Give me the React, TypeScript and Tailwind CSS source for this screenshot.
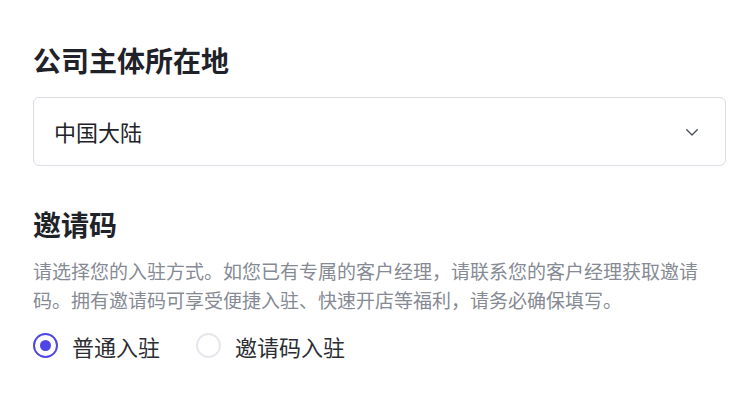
import React, { useState } from "react";

const font = { fontFamily: '"Noto Sans CJK SC", "Noto Sans", sans-serif' };

function Radio({
  label,
  checked,
  onClick,
}: {
  label: string;
  checked: boolean;
  onClick: () => void;
}) {
  return (
    <button type="button" onClick={onClick} className="flex items-center gap-[14px]">
      <span
        className={`flex h-[25px] w-[25px] items-center justify-center rounded-full border-2 ${
          checked ? "border-[#4f46e5]" : "border-[#e6e6ee]"
        }`}
      >
        {checked && <span className="h-[11px] w-[11px] rounded-full bg-[#4f46e5]" />}
      </span>
      <span className="text-[22px] leading-none text-[#2b2d33]">{label}</span>
    </button>
  );
}

export default function App() {
  const [mode, setMode] = useState<"normal" | "invite">("normal");

  return (
    <div className="h-[400px] w-[756px] bg-white px-[33px] pt-[40px]" style={font}>
      <h2 className="text-[28px] font-semibold leading-[40px] text-[#1f2329]">公司主体所在地</h2>
      <div className="mt-[17px] flex h-[69px] w-[693px] items-center justify-between rounded-[6px] border border-[#dcdbe8] pl-[20px] pr-[24px]">
        <span className="text-[22px] text-[#1f2329]">中国大陆</span>
        <svg width="18" height="18" viewBox="0 0 24 24" fill="none" stroke="#4b4f57" strokeWidth="1.8" strokeLinecap="round" strokeLinejoin="round">
          <path d="M5 9l7 7 7-7" />
        </svg>
      </div>

      <h2 className="mt-[38px] text-[28px] font-semibold leading-[40px] text-[#1f2329]">邀请码</h2>
      <p className="mt-[12px] w-[680px] text-[19px] leading-[29px] text-[#868a94]">
        请选择您的入驻方式。如您已有专属的客户经理，请联系您的客户经理获取邀请码。拥有邀请码可享受便捷入驻、快速开店等福利，请务必确保填写。
      </p>
      <div className="mt-[19px] flex items-center gap-[36px]">
        <Radio label="普通入驻" checked={mode === "normal"} onClick={() => setMode("normal")} />
        <Radio label="邀请码入驻" checked={mode === "invite"} onClick={() => setMode("invite")} />
      </div>
    </div>
  );
}
